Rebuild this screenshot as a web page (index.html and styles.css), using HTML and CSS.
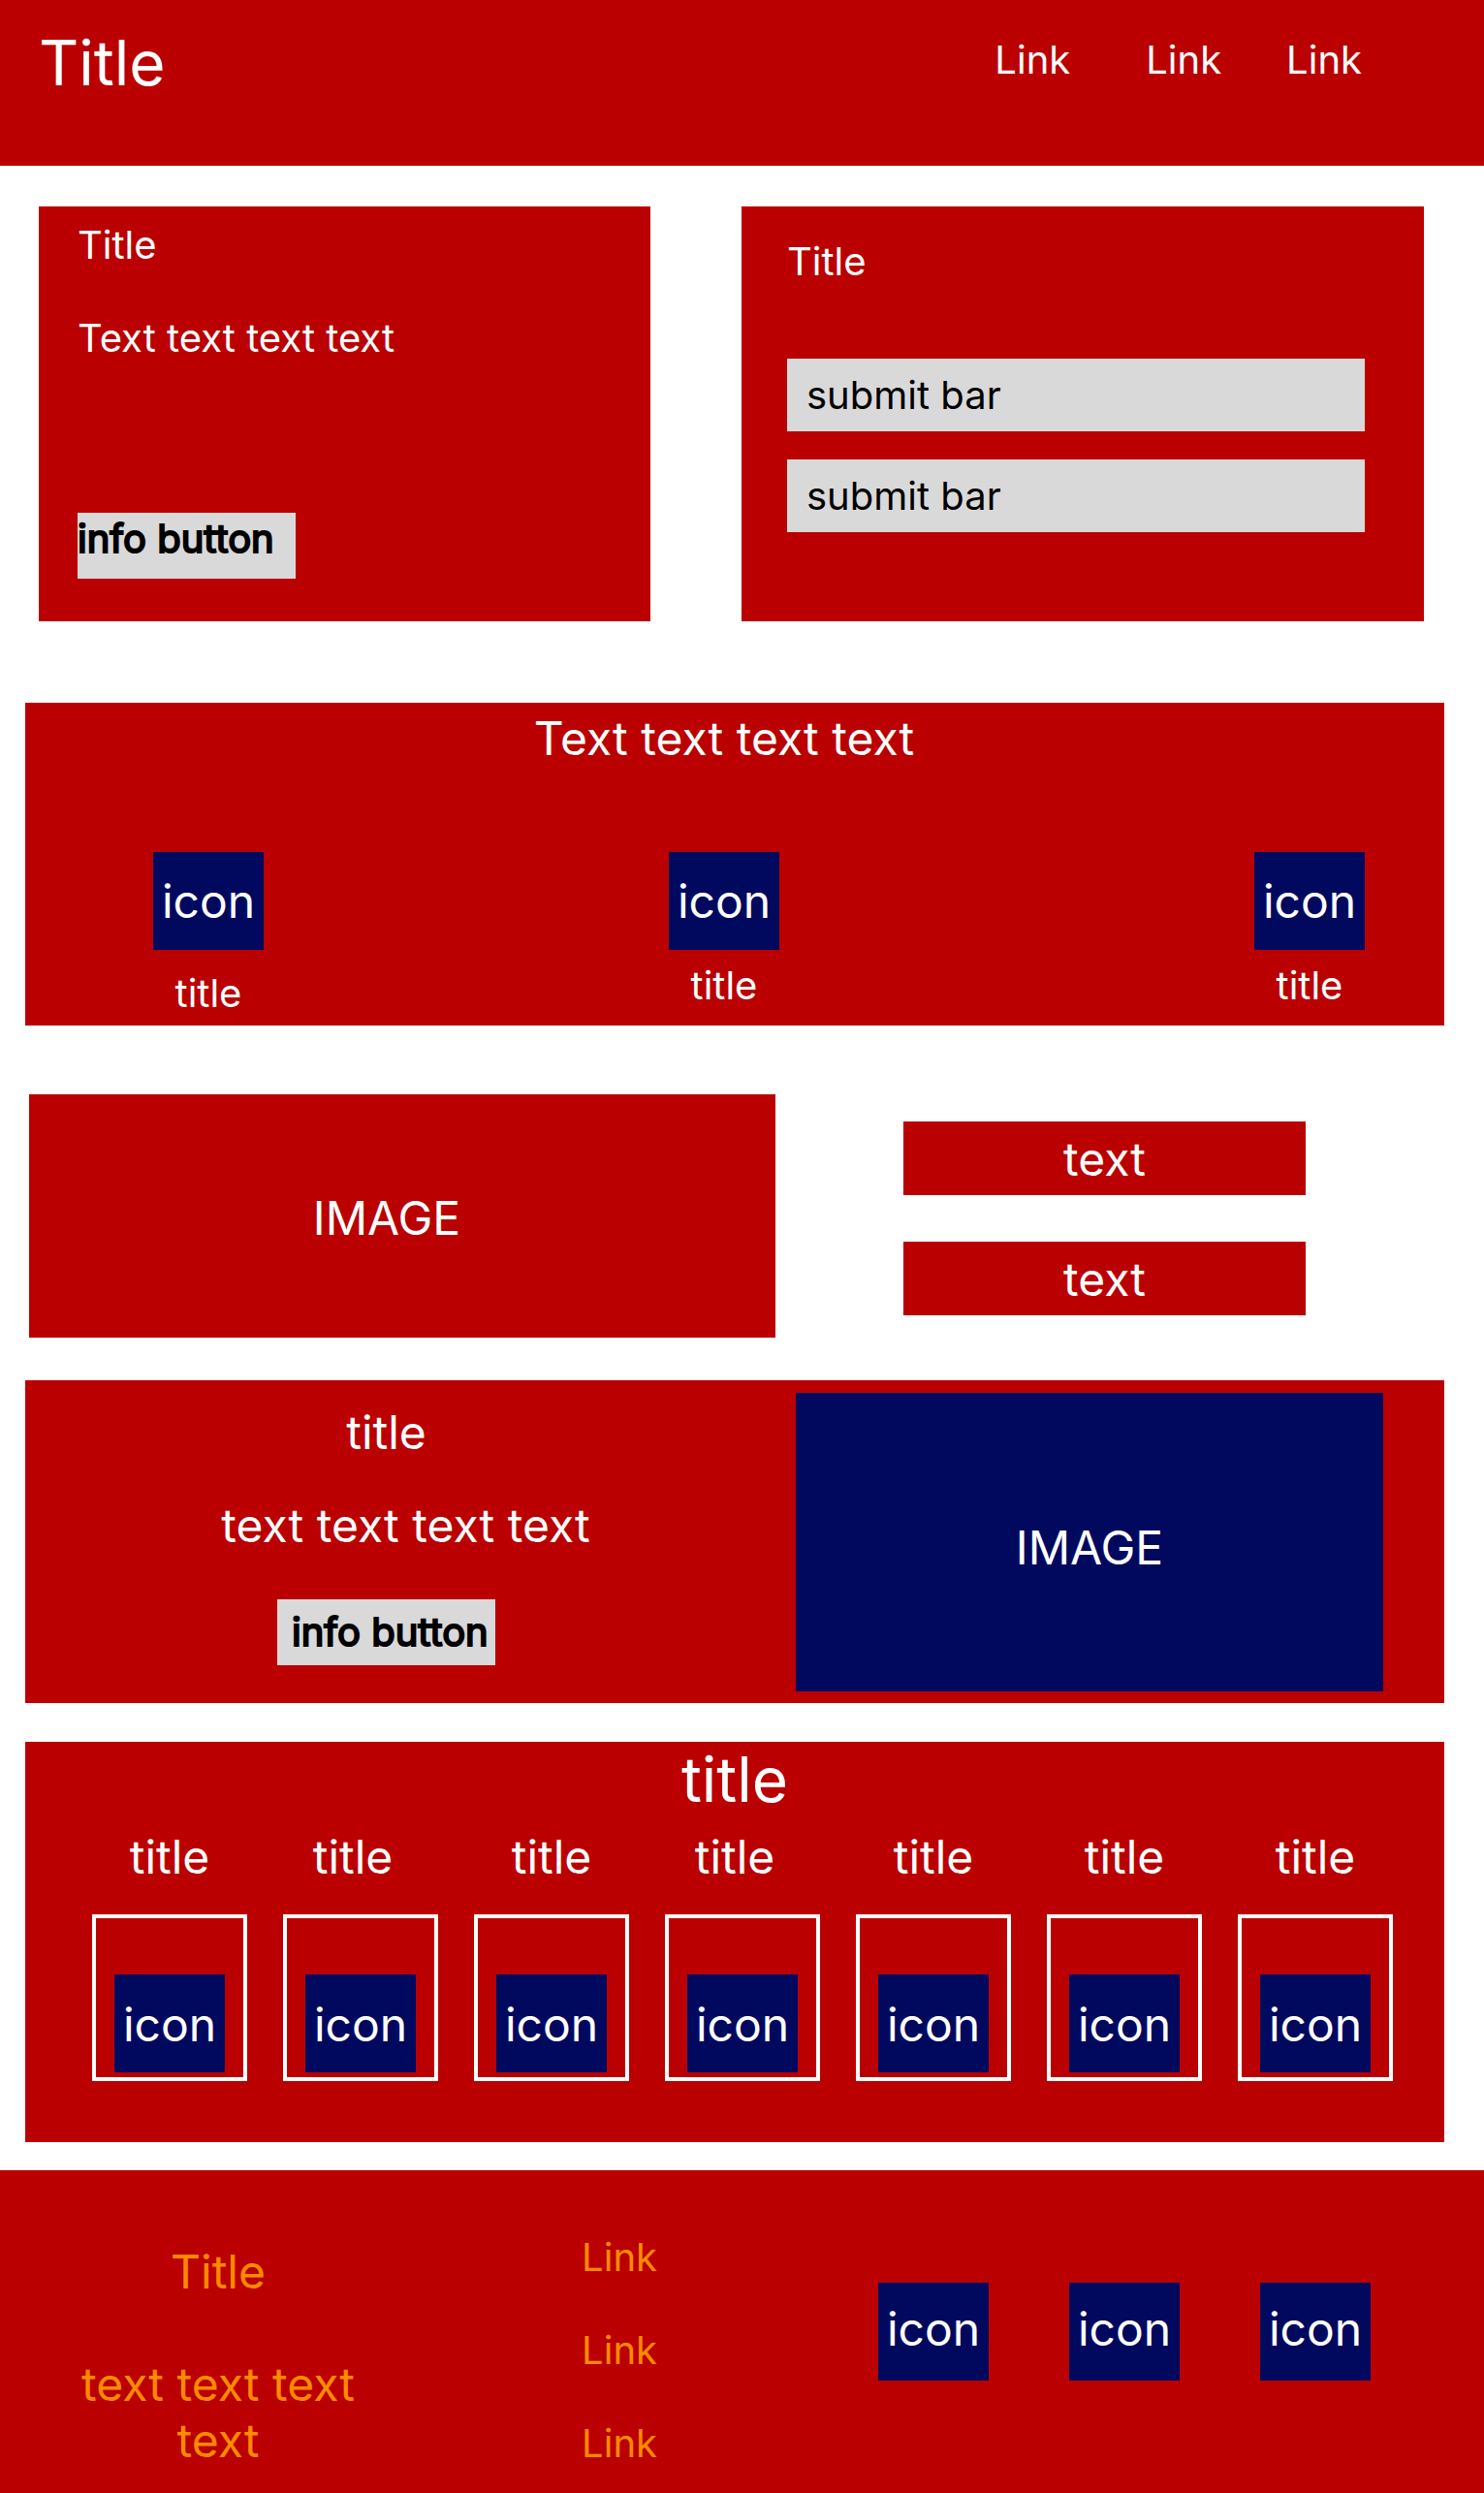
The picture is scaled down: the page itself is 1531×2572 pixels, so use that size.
FILE: index.html
```html
<!DOCTYPE html>
<html lang="en">
<head>
  <meta charset="utf-8">
  <meta name="viewport" content="width=device-width, initial-scale=1">
  <title>Title</title>
  <link rel="stylesheet" href="styles.css">
</head>
<body>
  <header class="site-header">
    <h1 class="text-xl">Title</h1>
    <nav class="site-nav">
      <a href="#">Link</a>
      <a href="#">Link</a>
      <a href="#">Link</a>
    </nav>
  </header>

  <main>
    <div class="cards">
      <section class="card card-info">
        <h2>Title</h2>
        <p>Text text text text</p>
        <button class="button" type="button">info button</button>
      </section>
      <form class="card card-form">
        <h2>Title</h2>
        <input class="field" type="text" aria-label="First submit bar" value="submit bar">
        <input class="field" type="text" aria-label="Second submit bar" value="submit bar">
      </form>
    </div>

    <section class="panel features">
      <h2 class="features-title">Text text text text</h2>
      <ul class="features-list">
        <li class="feature feature-low"><span class="icon">icon</span><span>title</span></li>
        <li class="feature"><span class="icon">icon</span><span>title</span></li>
        <li class="feature"><span class="icon">icon</span><span>title</span></li>
      </ul>
    </section>

    <section class="showcase">
      <div class="showcase-image">IMAGE</div>
      <div class="showcase-notes">
        <p class="note">text</p>
        <p class="note">text</p>
      </div>
    </section>

    <section class="panel promo">
      <div class="promo-copy">
        <h2>title</h2>
        <p class="promo-text">text text text text</p>
        <button class="button button-inset" type="button">info button</button>
      </div>
      <div class="promo-image">IMAGE</div>
    </section>

    <section class="panel gallery">
      <h2 class="text-xl">title</h2>
      <ul class="gallery-list">
        <li class="tile"><h3>title</h3><div class="frame"><span class="icon">icon</span></div></li>
        <li class="tile tile-left"><h3>title</h3><div class="frame"><span class="icon">icon</span></div></li>
        <li class="tile"><h3>title</h3><div class="frame"><span class="icon">icon</span></div></li>
        <li class="tile tile-left"><h3>title</h3><div class="frame"><span class="icon">icon</span></div></li>
        <li class="tile"><h3>title</h3><div class="frame"><span class="icon">icon</span></div></li>
        <li class="tile"><h3>title</h3><div class="frame"><span class="icon">icon</span></div></li>
        <li class="tile"><h3>title</h3><div class="frame"><span class="icon">icon</span></div></li>
      </ul>
    </section>
  </main>

  <footer class="site-footer">
    <div class="footer-about">
      <h2>Title</h2>
      <p>text text text text</p>
    </div>
    <nav class="footer-links">
      <a href="#">Link</a>
      <a href="#">Link</a>
      <a href="#">Link</a>
    </nav>
    <div class="footer-icons">
      <span class="icon">icon</span>
      <span class="icon">icon</span>
      <span class="icon">icon</span>
    </div>
  </footer>
</body>
</html>
```
FILE: styles.css
```css
:root {
  --red: #ba0000;
  --navy: #00095e;
  --grey: #d9d9d9;
  --orange: #ff8a00;
}

* {
  box-sizing: border-box;
}

body {
  margin: 0;
  background: #fff;
  color: #fff;
  font: 400 40px/48px Inter, sans-serif;
}

h1,
h2,
h3,
p,
ul {
  margin: 0;
  padding: 0;
  font: inherit;
  list-style: none;
}

a {
  color: inherit;
  text-decoration: none;
}

.text-xl {
  font-size: 64px;
  line-height: 78px;
}

.icon {
  display: flex;
  align-items: center;
  justify-content: center;
  width: 114px;
  height: 101px;
  background: var(--navy);
  font-size: 48px;
  line-height: 58px;
}

.button {
  width: 225px;
  height: 68px;
  padding: 0;
  border: 0;
  border-radius: 0;
  background: var(--grey);
  color: #000;
  font: inherit;
  text-align: left;
  white-space: nowrap;
  -webkit-text-stroke: 2px #000;
}

/* Header */
.site-header {
  display: flex;
  justify-content: space-between;
  align-items: flex-start;
  padding: 26px 126px 67px 40px;
  background: var(--red);
}

.site-nav {
  display: flex;
  gap: 67px;
  padding-top: 12px;
}

.site-nav a:first-child {
  margin-right: 11px;
}

/* Two cards */
.cards {
  display: grid;
  grid-template-columns: 631fr 704fr;
  gap: 94px;
  padding: 42px 62px 84px 40px;
}

.card {
  display: flex;
  flex-direction: column;
  background: var(--red);
}

.card-info {
  align-items: flex-start;
  gap: 48px;
  padding: 16px 40px 44px;
}

.card-info .button {
  margin-top: auto;
  padding-bottom: 14px;
}

.card-form {
  gap: 29px;
  padding: 33px 61px 92px 47px;
}

.card-form h2 {
  margin-bottom: 47px;
}

.field {
  width: 100%;
  height: 75px;
  padding: 0 20px;
  border: 0;
  border-radius: 0;
  background: var(--grey);
  color: #000;
  font: inherit;
}

.panel {
  margin: 0 41px 0 26px;
  background: var(--red);
}

/* Features */
.features {
  padding: 8px 82px 9px 132px;
}

.features-title {
  margin-right: 72px;
  font-size: 48px;
  line-height: 58px;
  text-align: center;
}

.features-list {
  display: grid;
  grid-template-columns: 532fr 604fr 114px;
  margin-top: 88px;
}

.feature {
  display: flex;
  flex-direction: column;
  align-items: center;
  gap: 13px;
  width: 114px;
}

.feature-low {
  gap: 21px;
}

/* Image with notes */
.showcase {
  display: grid;
  grid-template-columns: 770fr 415fr;
  gap: 132px;
  padding: 71px 184px 44px 30px;
  font-size: 48px;
  line-height: 58px;
  text-align: center;
}

.showcase-image {
  padding: 99px 32px 94px 0;
  background: var(--red);
}

.showcase-notes {
  display: flex;
  flex-direction: column;
  gap: 48px;
  padding-top: 28px;
}

.note {
  padding: 10px 0 8px;
  background: var(--red);
}

/* Promo */
.promo {
  display: grid;
  grid-template-columns: 745fr 606fr;
  gap: 50px;
  padding: 13px 63px 12px 0;
  font-size: 48px;
  line-height: 58px;
  text-align: center;
}

.promo-copy {
  display: flex;
  flex-direction: column;
  align-items: center;
  padding-top: 12px;
}

.promo-text {
  margin: 38px 0 47px;
  padding-left: 40px;
}

.button-inset {
  padding-left: 15px;
  font-size: 40px;
  line-height: 48px;
}

.promo-image {
  padding: 131px 0 119px;
  background: var(--navy);
}

/* Gallery */
.gallery {
  margin-top: 40px;
  margin-bottom: 29px;
  padding-bottom: 63px;
  text-align: center;
}

.gallery-list {
  display: grid;
  grid-template-columns: repeat(7, 1fr);
  gap: 37px;
  padding: 12px 53px 0 69px;
}

.tile h3 {
  margin-bottom: 30px;
  font-size: 48px;
  line-height: 58px;
}

.tile-left h3 {
  padding-right: 16px;
}

.frame {
  display: flex;
  justify-content: center;
  padding: 58px 0 5px;
  border: 4px solid #fff;
}

.frame .icon {
  padding-top: 3px;
}

/* Footer */
.site-footer {
  display: grid;
  grid-template-columns: 370fr 268fr 736fr;
  padding: 66px 117px 25px 40px;
  background: var(--red);
  color: var(--orange);
}

.footer-about {
  display: flex;
  flex-direction: column;
  gap: 58px;
  padding-top: 10px;
  font-size: 48px;
  line-height: 58px;
  text-align: center;
}

.footer-links {
  display: flex;
  flex-direction: column;
  align-items: flex-end;
  gap: 48px;
}

.footer-icons {
  display: flex;
  justify-content: flex-end;
  gap: 83px;
  padding-top: 50px;
  color: #fff;
}

.footer-icons .icon {
  padding-bottom: 6px;
}
```
